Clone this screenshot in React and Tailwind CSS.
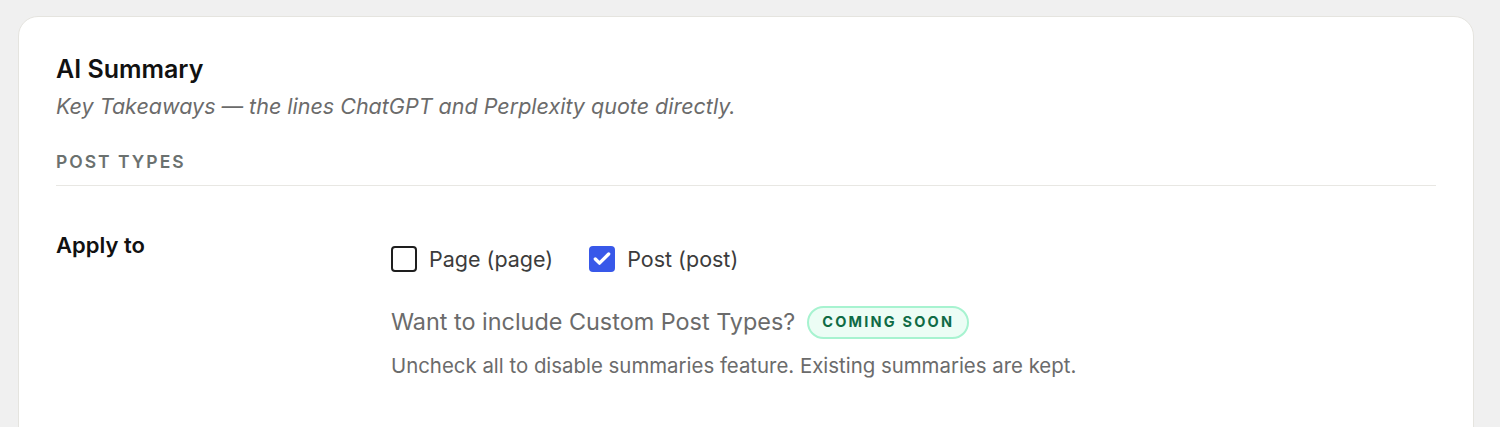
import { Check } from 'lucide-react';

const postTypes = [
    { label: 'Page (page)', checked: false },
    { label: 'Post (post)', checked: true },
];

const Checkbox = ({ checked, label }) => (
    <label className="flex items-center gap-3 cursor-pointer">
        {checked ? (
            <span className="w-[26px] h-[26px] rounded-[4px] bg-[#3858e9] flex items-center justify-center">
                <Check size={20} strokeWidth={4} className="text-white" />
            </span>
        ) : (
            <span className="w-[26px] h-[26px] rounded-[4px] border-2 border-[#1e1e1e] bg-white" />
        )}
        <span className="text-[21.5px] leading-[30px] text-[#3c3c3c]">{label}</span>
    </label>
);

export default function App() {
    return (
        <div className="h-[427px] bg-[#f0f0f0] pt-4 px-[18px] font-['Inter',sans-serif] overflow-hidden">
            <div className="mr-[8px] bg-white border border-[#e5e4df] rounded-[20px] px-[37px] pt-[36px] pb-10 h-[460px]">
                {/* Header */}
                <h2 className="text-[25px] font-semibold text-[#111] leading-[32px]">AI Summary</h2>
                <p className="text-[21.5px] italic text-[#6b6b6b] mt-[6px] leading-[30px]">
                    Key Takeaways — the lines ChatGPT and Perplexity quote directly.
                </p>

                {/* Section */}
                <div className="mt-[29px] pb-[11px] border-b border-[#e8e7e3]">
                    <h3 className="text-[17.5px] font-semibold text-[#6b716f] tracking-[2px] uppercase leading-6">Post types</h3>
                </div>

                <div className="flex mt-[44px]">
                    <div className="w-[335px] shrink-0 text-[22px] font-semibold text-[#111] leading-[30px]">Apply to</div>
                    <div className="pt-[14px]">
                        <div className="flex items-center gap-[36px]">
                            {postTypes.map((pt) => (
                                <Checkbox key={pt.label} {...pt} />
                            ))}
                        </div>
                        <div className="flex items-center gap-[12px] mt-[31px]">
                            <span className="text-[23.4px] leading-[34px] text-[#6b6b6b]">Want to include Custom Post Types?</span>
                            <span className="h-[33px] px-[13px] flex items-center rounded-full bg-[#ecfdf5] border-2 border-[#a7f3d0] text-[14.5px] font-bold tracking-[2.2px] text-[#0f6b45]">
                                COMING SOON
                            </span>
                        </div>
                        <p className="text-[20.4px] leading-[28px] text-[#6b6b6b] mt-[13px]">
                            Uncheck all to disable summaries feature. Existing summaries are kept.
                        </p>
                    </div>
                </div>
            </div>
        </div>
    );
}
